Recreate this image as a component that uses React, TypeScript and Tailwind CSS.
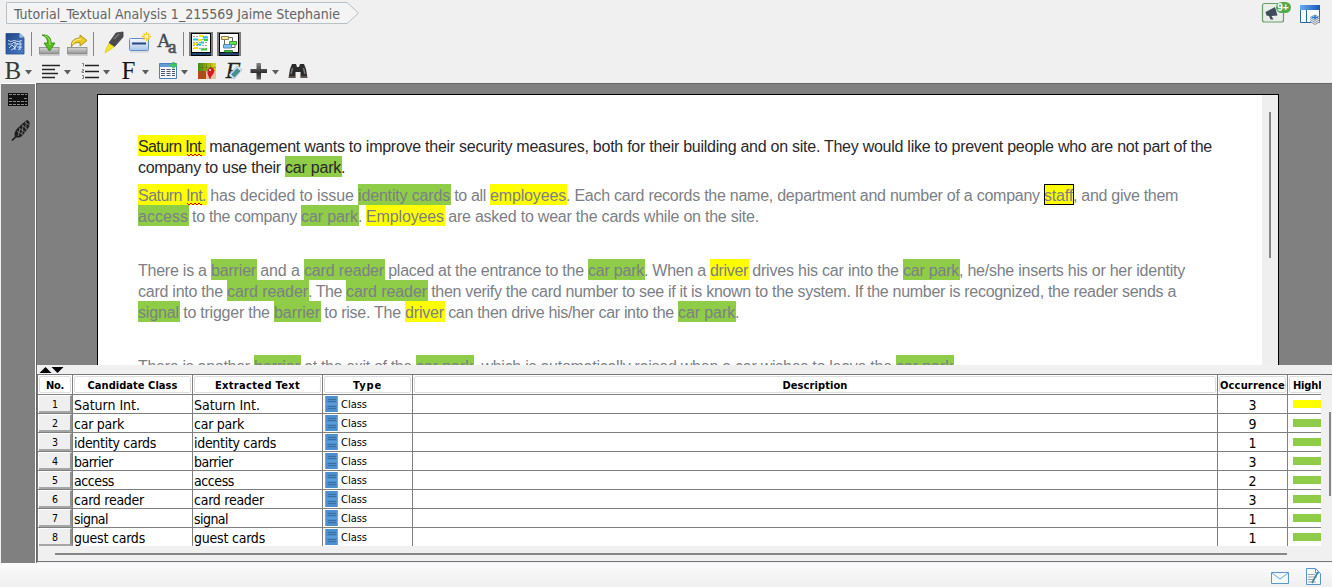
import { useLayoutEffect, useRef, type ReactNode } from "react";

type Tone = "" | "y" | "g" | "s";
type Segment = [text: string, width: number, tone?: Tone];

/** Text run whose tracking is adjusted so that it fills the given width. */
function Fit({ text, width, className = "" }: { text: string; width: number; className?: string }) {
  const ref = useRef<HTMLSpanElement>(null);
  useLayoutEffect(() => {
    const el = ref.current;
    if (!el) return;
    el.style.letterSpacing = "0px";
    const natural = el.getBoundingClientRect().width;
    el.style.letterSpacing = `${(width - natural) / text.length}px`;
  }, [text, width]);
  return (
    <span ref={ref} className={`inline-block shrink-0 whitespace-pre ${className}`}>
      {text}
    </span>
  );
}

const tones: Record<Tone, string> = {
  "": "",
  y: "pr-px bg-[#ffff00]",
  g: "pr-px bg-[#8fcc48]",
  s: "pr-px bg-[#ffff00] outline outline-1 -outline-offset-1 outline-black",
};

const squiggle = "M0 1l2 2 2-2 2 2 2-2 2 2 2-2 2 2 2-2";

function Line({ segments, className = "" }: { segments: Segment[]; className?: string }) {
  return (
    <div className={`flex h-[21px] shrink-0 leading-[23px] ${className}`}>
      {segments.map(([text, width, tone = ""], i) => (
        <span key={i} className={`relative h-[21px] shrink-0 ${tones[tone]} ${i > 0 && !tone ? "-ml-px" : ""}`}>
          <Fit text={text} width={tone ? width - 1 : i > 0 ? width + 1 : width} />
          {text === "Saturn Int." && (
            <svg className="absolute left-[49px] top-[18px]" width="15" height="4" viewBox="0 0 15 4">
              <path d={squiggle} fill="none" stroke="#e80000" strokeWidth="1" />
            </svg>
          )}
        </span>
      ))}
    </div>
  );
}

const intro: Segment[][] = [
  [["Saturn Int.", 68, "y"], [" management wants to improve their security measures, both for their building and on site. They would like to prevent people who are not part of the", 1006]],
  [["company to use their ", 147], ["car park", 57, "g"], [".", 4]],
];
const second: Segment[][] = [
  [["Saturn Int.", 69, "y"], [" has decided to issue ", 151], ["identity cards", 93, "g"], [" to all ", 39], ["employees", 77, "y"], [". Each card records the name, department and number of a company ", 477], ["staff", 30, "s"], [", and give them", 104]],
  [["access", 51, "g"], [" to the company ", 112], ["car park", 58, "g"], [". ", 7], ["Employees", 79, "y"], [" are asked to wear the cards while on the site.", 314]],
];
const third: Segment[][] = [
  [["There is a ", 73], ["barrier", 46, "g"], [" and a ", 47], ["card reader", 81, "g"], [" placed at the entrance to the ", 203], ["car park", 57, "g"], [". When a ", 65], ["driver", 39, "y"], [" drives his car into the ", 154], ["car park", 57, "g"], [", he/she inserts his or her identity", 225]],
  [["card into the ", 89], ["card reader", 82, "g"], [". The ", 37], ["card reader", 82, "g"], [" then verify the card number to see if it is known to the system. If the number is recognized, the reader sends a", 748]],
  [["signal", 42, "g"], [" to trigger the ", 94], ["barrier", 47, "g"], [" to rise. The ", 84], ["driver", 40, "y"], [" can then drive his/her car into the ", 233], ["car park", 58, "g"], [".", 3]],
];
const fourth: Segment[] = [
  ["There is another ", 116], ["barrier", 47, "g"], [" at the exit of the ", 115], ["car park", 58, "g"], [", which is automatically raised when a car wishes to leave the ", 422], ["car park", 58, "g"], [".", 4],
];

/** Toolbar slot; drawing coordinates share the window's pixel grid. */
function Slot({ x, y, w, h, children }: { x: number; y: number; w: number; h: number; children?: ReactNode }) {
  return (
    <svg className="block shrink-0" width={w} height={h} viewBox={`${x} ${y} ${w} ${h}`}>
      {children}
    </svg>
  );
}

const Arrow = ({ x }: { x: number }) => <path d={`M${x} 70h7l-3.5 4.5z`} fill="#5c5c5c" />;
const Sep = ({ x }: { x: number }) => <path d={`M${x + 0.5} 32v24`} stroke="#858585" />;

function Gradients() {
  return (
    <defs>
      <linearGradient id="tray" x1="0" y1="0" x2="0" y2="1">
        <stop offset="0" stopColor="#d8d8d8" />
        <stop offset="1" stopColor="#929292" />
      </linearGradient>
      <linearGradient id="doc" x1="0" y1="0" x2="1" y2="1">
        <stop offset="0" stopColor="#1d4584" />
        <stop offset="1" stopColor="#4c7dc6" />
      </linearGradient>
      <linearGradient id="card" x1="0" y1="0" x2="0" y2="1">
        <stop offset="0" stopColor="#f5f9fe" />
        <stop offset="1" stopColor="#a9c5ea" />
      </linearGradient>
      <linearGradient id="dark" x1="0" y1="0" x2="0" y2="1">
        <stop offset="0" stopColor="#888" />
        <stop offset=".6" stopColor="#2c2c2c" />
        <stop offset="1" stopColor="#666" />
      </linearGradient>
      <linearGradient id="palette" x1="0" y1="0" x2="1" y2="0">
        <stop offset="0" stopColor="#3f8e12" />
        <stop offset="1" stopColor="#e2d51a" />
      </linearGradient>
    </defs>
  );
}

function ToolbarTop() {
  return (
    <div className="flex h-[29px] shrink-0">
      <Slot x={0} y={29} w={30} h={29}>
        <Gradients />
        <path d="M6 33.500h13.500l4.500 4v16.500H6z" fill="url(#doc)" stroke="#214d90" strokeWidth=".8" />
        <path d="M19.500 33.500v4h4.500z" fill="#a5c5f0" />
        <path d="M8 40.500l3 1 3-1 4 1 4-1M8 44h4l2-2 3 2h5M9 48l3-3 3 3-4 2M15 42v8M18 43l-4 6M17 47h5M18 50l3-3M20 41v9" fill="none" stroke="#d5e4fa" strokeWidth=".9" />
      </Slot>
      <Slot x={30} y={29} w={34} h={29}>
        <Sep x={31} />
        <rect x="39.500" y="47.500" width="19.500" height="6.500" fill="url(#tray)" stroke="#858585" strokeWidth=".8" />
        <path d="M40 55.500h20" stroke="#d0d0d0" />
        <path d="M42 35c6-.5 9 2 9 8h4l-5.500 8-5.500-8h3.500c0-4-1.500-6-5.500-8z" fill="#55bf1d" stroke="#298309" strokeWidth=".8" />
        <path d="M45 36c4 1 5 4 5 9" fill="none" stroke="#adeb70" strokeWidth="1" />
      </Slot>
      <Slot x={64} y={29} w={38} h={29}>
        <rect x="67.500" y="47.500" width="19.500" height="6.500" fill="url(#tray)" stroke="#858585" strokeWidth=".8" />
        <path d="M68 55.500h20" stroke="#d0d0d0" />
        <path d="M71.500 47c-1-6 3-9 8.500-9V35l7 5.500-7 5.500V42.500c-4 0-7 .500-8.500 4.500z" fill="#eccb29" stroke="#a18309" strokeWidth=".8" />
        <path d="M72.500 44c1-3 4-5 8.500-5" fill="none" stroke="#fff59c" />
        <Sep x={93} />
      </Slot>
      <Slot x={102} y={29} w={26} h={29}>
        <path d="M116 33l7-1v5l-8.500 9.500-5.500-3.500z" fill="#4b4b4d" stroke="#39393b" strokeWidth=".8" />
        <path d="M114 39l5-5" stroke="#7b7b7e" strokeWidth="1.500" />
        <path d="M109 43.500l5 3.500-3.500 2.500-5.500 3.500 1.500-5z" fill="#f4e523" stroke="#d5c50c" strokeWidth=".7" />
      </Slot>
      <Slot x={128} y={29} w={27} h={29}>
        <rect x="129.500" y="38.500" width="19" height="12" rx="1" fill="url(#card)" stroke="#648cc6" />
        <path d="M132 43.500h14" stroke="#25467e" strokeWidth="2" />
        <path d="M130 52h19" stroke="#c6cbd3" />
        <path d="M146.500 32v9M142 36.500h9M143.500 33.500l6 6M149.500 33.500l-6 6" stroke="#efc51d" strokeWidth="1.300" />
        <circle cx="146.500" cy="36.500" r="2" fill="#fff39b" />
      </Slot>
      <Slot x={155} y={29} w={33} h={29}>
        <text x="157" y="47" fontFamily="Liberation Serif, serif" fontSize="19" fill="#454a50" stroke="#454a50" strokeWidth=".4">A</text>
        <text x="168" y="53" fontFamily="Liberation Serif, serif" fontSize="19" fill="#59616b" stroke="#454a50" strokeWidth=".6">a</text>
        <Sep x={183} />
      </Slot>
      <Slot x={188} y={29} w={28} h={29}>
        <path d="M189 32h24v24h-24z" fill="#7c7c7c" />
        <path d="M191 33h20v23h-20z" fill="#000" />
        <path d="M192 34h18v18h-18z" fill="#fff" />
        <path d="M191.500 54h19.500" stroke="#3575bd" strokeWidth="1.200" />
        <path d="M193 36.500h15M193 39.500h14M193 42.500h15M193 45.500h14M193 48.500h15" stroke="#a5a5a5" strokeDasharray="2 1" />
        <path d="M193 39.500h5M203 37.500h5M197 44.500h4M201 42.500h3" stroke="#13c8f5" strokeWidth="1.800" />
        <path d="M199 36h4M198 40h4M193 44h4M194 48h4" stroke="#f4e500" strokeWidth="1.800" />
        <path d="M204 40h4M201 49.500h6" stroke="#2dd52d" strokeWidth="1.800" />
      </Slot>
      <Slot x={216} y={29} w={30} h={29}>
        <path d="M217 32h24v24h-24z" fill="#7c7c7c" />
        <path d="M219 33h20v23h-20z" fill="#000" />
        <path d="M220 34h18v18h-18z" fill="#fff" />
        <path d="M219.500 54h19.500" stroke="#3575bd" strokeWidth="1.200" />
        <path d="M224.500 39v6M229 37.500h3.500v4M231 47.500h4v-3" fill="none" stroke="#666" />
        <path d="M221.500 36.500h7v3h-7z" fill="#ffe982" stroke="#85805b" />
        <path d="M229.500 41.500h7v3h-7z" fill="#50e947" stroke="#4c944a" />
        <path d="M223.500 44.500h8v3.500h-8z" fill="#72c5ff" stroke="#6886a0" />
        <path d="M224.500 50.500h8v1.500h-8z" fill="#44de44" stroke="#39903c" />
      </Slot>
    </div>
  );
}

function ToolbarFormat() {
  return (
    <div className="flex h-[25px] shrink-0">
      <Slot x={0} y={58} w={38} h={25}>
        <text x="4.500" y="79" fontFamily="Liberation Serif, serif" fontSize="25" fill="#383838">B</text>
        <Arrow x={25} />
      </Slot>
      <Slot x={38} y={58} w={40} h={25}>
        <path d="M42 65.500h18M42 69.500h13M45 73.500h13M42 73.500h3M42 77.500h13" stroke="#252525" strokeWidth="1.300" />
        <Arrow x={64} />
      </Slot>
      <Slot x={78} y={58} w={40} h={25}>
        <path d="M85 65.500h14M85 71.500h14M85 77.500h14" stroke="#222" strokeWidth="1.500" />
        <path d="M82 63.500h1.500v3M82 69.500h1.500v1.500h-1.500v1.500h2M82 75.500h1.500v3h-1.500" fill="none" stroke="#555" strokeWidth=".7" />
        <Arrow x={103} />
      </Slot>
      <Slot x={118} y={58} w={36} h={25}>
        <text x="121.500" y="79" fontFamily="Liberation Serif, serif" fontSize="25" fill="#151515">F</text>
        <Arrow x={142} />
      </Slot>
      <Slot x={154} y={58} w={40} h={25}>
        <path d="M159.500 63.500h17v15h-17z" fill="#f5f9ff" stroke="#4c82bd" />
        <path d="M160 64h16v3h-16z" fill="#629ada" />
        <path d="M161 69.500h4M166.500 69.500h4M172 69.500h3M161 71.500h4M166.500 71.500h4M172 71.500h3M161 73.500h4M166.500 73.500h4M172 73.500h3M161 75.500h4M166.500 75.500h4M172 75.500h3" stroke="#505966" strokeWidth="1" />
        <path d="M173.500 62v6.500M170 65.200h7" stroke="#3dc45d" strokeWidth="2.200" />
        <Arrow x={181} />
      </Slot>
      <Slot x={194} y={58} w={28} h={25}>
        <path d="M198 63h18v16h-18z" fill="url(#palette)" />
        <path d="M198 71h8v8h-8z" fill="#b54a16" />
        <path d="M206 71h10v8h-10z" fill="#e9c3a0" />
        <path d="M198 67.500h18M202.500 63v16M206.500 63v8M210.500 63v8" stroke="#665f12" strokeWidth=".4" />
        <path d="M208 70c1-3 6-3 6 1 0 3-3 4-4 8-1-3-3-5-2-9z" fill="#de1820" stroke="#a8151c" strokeWidth=".5" />
        <circle cx="210" cy="70" r="1" fill="#fff" />
      </Slot>
      <Slot x={222} y={58} w={25} h={25}>
        <text x="225.500" y="78" fontFamily="Liberation Serif, serif" fontStyle="italic" fontSize="24" fill="#222" stroke="#222" strokeWidth=".3">F</text>
        <path d="M229 75l8-9 5 4-8 9z" fill="#d8edf6" stroke="#9bbccb" strokeWidth=".8" />
        <path d="M231.500 74.500l5.500-6 3 2.500-5.500 6z" fill="#4c9280" stroke="#397cae" strokeWidth=".8" />
      </Slot>
      <Slot x={247} y={58} w={37} h={25}>
        <path d="M256.500 63h4.500v6h6v4h-6v6.500h-4.500v-6.500h-6v-4h6z" fill="url(#dark)" />
        <Arrow x={272} />
      </Slot>
      <Slot x={284} y={58} w={28} h={25}>
        <path d="M292 64h4l1 3h2l1-3h4l2 5 1.500 9h-7v-6h-5v6h-7l1.500-9z" fill="#2b2b2c" />
        <path d="M292.500 68l-1.500 6M303.500 68l1.500 6" stroke="#777" strokeWidth="1.500" />
        <path d="M289 77h7M300 77h7" stroke="#927d75" />
      </Slot>
    </div>
  );
}

function Breadcrumb() {
  return (
    <header className="flex h-[29px] shrink-0 justify-between">
      <div className="relative flex h-[24px] w-[362px] items-start pl-[14px] pt-[3px]">
        <svg className="absolute left-0 top-0" width="362" height="26" viewBox="0 0 362 26">
          <path d="M6.500 2.500H347L358.500 13 347 23.500H6.500z" fill="#f4f4f4" stroke="#b8c0c8" />
        </svg>
        <Fit text="Tutorial_Textual Analysis 1_215569 Jaime Stephanie" width={326} className="relative text-[14px] leading-[22px] text-[#626466]" />
      </div>
      <svg className="shrink-0" width="72" height="28" viewBox="1260 0 72 28">
        <defs>
          <linearGradient id="blueBar" x1="0" y1="0" x2="1" y2="0">
            <stop offset="0" stopColor="#6aa9ee" />
            <stop offset="1" stopColor="#1859bb" />
          </linearGradient>
        </defs>
        <rect x="1262.500" y="3.500" width="21" height="18.500" rx="2" fill="#e9eee9" stroke="#6a9d6a" strokeWidth="1.200" />
        <path d="M1265.500 12l3-1.500 6.500-3.500 2.500 8.500-6 .500 2 3.500h-3l-1.500-3.500-2.500-.500z" fill="#3e4c5c" />
        <rect x="1276" y="2" width="15" height="11" rx="5.500" fill="#54a94d" />
        <text x="1277.300" y="11" fontFamily="Liberation Sans, sans-serif" fontSize="10" fontWeight="bold" fill="#fff">9+</text>
        <path d="M1300.500 6.500h19v16h-19z" fill="#f8fcff" stroke="#286a9a" />
        <path d="M1300 5h20v5h-20z" fill="url(#blueBar)" />
        <path d="M1306.500 10v12" stroke="#286a9a" />
        <path d="M1310 17.500l5-2.500 5 2.500-5 3zM1310 19.500l5 3 5-3M1310 21.500l5 3 5-3" fill="#edf0f3" stroke="#7c8999" strokeWidth=".9" />
        <path d="M1312 17.500h6M1315 15.500v4" stroke="#2479d2" strokeWidth="1.600" />
      </svg>
    </header>
  );
}

const rows: [string, number, boolean?][] = [
  ["Saturn Int.", 3, true],
  ["car park", 9],
  ["identity cards", 1],
  ["barrier", 3],
  ["access", 2],
  ["card reader", 3],
  ["signal", 1],
  ["guest cards", 1],
];
const textWidths: Record<string, number> = {
  "Saturn Int.": 66, "car park": 50, "identity cards": 82, barrier: 39, access: 40, "card reader": 70, signal: 34, "guest cards": 71,
};

const columns: [string, number, string][] = [
  ["No.", 18, "w-[35px]"],
  ["Candidate Class", 90, "w-[120px]"],
  ["Extracted Text", 85, "w-[130px]"],
  ["Type", 29, "w-[90px]"],
  ["Description", 65, "w-[805px]"],
  ["Occurrence", 65, "w-[70px]"],
];

function ClassTable() {
  return (
    <div className="flex h-[188px] shrink-0 flex-col border-b border-l border-t border-[#73767a]">
      <div className="flex h-[171px] shrink-0">
        <div className="w-[1283px] shrink-0 overflow-hidden bg-white text-black">
          <div className="flex h-[20px] w-[1360px] border-b border-[#808080] text-[11px] font-bold leading-[19px]">
            {columns.map(([name, width, cls]) => (
              <div key={name} className={`flex shrink-0 border-r border-[#808080] p-px ${cls}`}>
                <div className="flex h-[17px] flex-1 justify-center rounded-[2px] border border-[#dedede]">
                  <Fit text={name} width={width} className="leading-[17px]" />
                </div>
              </div>
            ))}
            <div className="m-px flex w-[60px] rounded-[2px] border border-[#dedede] pl-[3px]">
              <Fit text="Highlight" width={50} className="leading-[17px]" />
            </div>
          </div>
          {rows.map(([name, count, yellow], i) => (
            <div key={name} className="flex h-[19px] w-[1360px] border-b border-[#808080] text-[14px]">
              <div className="flex w-[35px] shrink-0 border-r border-[#808080] pl-px">
                <div className="h-[18px] w-[33px] border-b-2 border-r-2 border-t border-b-[#a6a6a6] border-r-[#929292] border-t-white bg-[#efefef] pl-px text-center text-[10.5px] leading-[16px]">{i + 1}</div>
              </div>
              <div className="w-[120px] shrink-0 border-r border-[#808080] pl-px">
                <Fit text={name} width={textWidths[name]} className="leading-[20px]" />
              </div>
              <div className="w-[130px] shrink-0 border-r border-[#808080] pl-px">
                <Fit text={name} width={textWidths[name]} className="leading-[20px]" />
              </div>
              <div className="flex w-[90px] shrink-0 gap-[3px] border-r border-[#808080] pl-[2px] pt-px">
                <svg width="13" height="16" viewBox="0 0 13 16">
                  <path d="M0 0h13v16H0z" fill="#4d8fce" />
                  <path d="M.5 0v16M12.500 0v16" stroke="#6cabdf" />
                  <path d="M3 3.500h8M3 5.500h8M3 10.500h8M3 12.500h8" stroke="#3c719f" />
                  <path d="M0 8h13" stroke="#68a7e3" />
                </svg>
                <Fit text="Class" width={26} className="text-[11px] leading-[18px]" />
              </div>
              <div className="w-[805px] shrink-0 border-r border-[#808080]" />
              <div className="w-[70px] shrink-0 border-r border-[#808080] text-center leading-[21px]">{count}</div>
              <div className="pl-[5px] pt-[5px]">
                <div className={`h-[8px] w-[60px] ${yellow ? "bg-[#ffff00]" : "bg-[#8fcc48]"}`} />
              </div>
            </div>
          ))}
        </div>
        <div className="flex flex-1 justify-end pt-[37px]">
          <div className="mr-px h-[84px] w-[2px] bg-[#868686]" />
        </div>
      </div>
      <div className="pl-[17px] pt-[7px]">
        <div className="h-[2px] w-[1232px] bg-[#868686]" />
      </div>
    </div>
  );
}

function Sidebar() {
  return (
    <aside className="w-[35px] shrink-0 border-r border-t border-white bg-[#808080]">
      <svg width="34" height="66" viewBox="1 84 34 66">
        <path d="M8 93h20v13H8z" fill="#111" />
        <path d="M9 94.500h18M9 98.500h3M24 98.500h3M9 101.500h18M9 104.500h18" stroke="#8b8b8b" strokeDasharray="3 1" />
        <path d="M12 140.500l4-4" stroke="#171717" strokeWidth="1.600" />
        <path d="M15 137c-2-6 3-9 7-13l5-4c3 1 3 4 2 7l-6 8c-3 3-5 3-8 2z" fill="#1c1c1c" />
        <path d="M17 131l6 4M19 128l6 4M22 125l5 4M25 122l4 3M18 136l2-7M22 134l1-9M26 130V122" stroke="#858585" strokeWidth=".8" />
      </svg>
    </aside>
  );
}

function DocumentPane() {
  return (
    <div className="h-[282px] shrink-0 overflow-hidden border-t border-[#666] bg-[#808080] pl-[60px] pt-[10px]">
      <div className="flex h-[300px] w-[1182px] border border-black bg-white">
        <div className="w-[1164px] shrink-0 bg-white pl-[40px] pt-[40px] font-['Liberation_Sans',Arial,sans-serif] text-[16px] text-[#7c8086]">
          <div className="text-[#29292c]">
            {intro.map((l, i) => <Line key={i} segments={l} />)}
          </div>
          <div className="pt-[7px]">
            {second.map((l, i) => <Line key={i} segments={l} />)}
          </div>
          <div className="pt-[33px]">
            {third.map((l, i) => <Line key={i} segments={l} />)}
          </div>
          <div className="pt-[33px]">
            <Line segments={fourth} />
          </div>
        </div>
        <div className="flex flex-1 bg-[#efefef] pl-[7px] pt-[17px]">
          <div className="h-[146px] w-[2px] bg-[#868686]" />
        </div>
      </div>
    </div>
  );
}

export default function App() {
  return (
    <div className="flex h-[587px] w-[1332px] flex-col overflow-hidden bg-[#f0f0f0] font-['DejaVu_Sans_Condensed','DejaVu_Sans',sans-serif]">
      <Breadcrumb />
      <ToolbarTop />
      <ToolbarFormat />
      <main className="flex h-[480px] shrink-0 pl-px">
        <Sidebar />
        <section className="flex min-w-0 flex-1 flex-col border-l border-[#686868]">
          <DocumentPane />
          <div className="h-[9px] shrink-0">
            <svg width="30" height="9" viewBox="0 0 30 9">
              <path d="M2.500 8h12l-6-6zM14.500 2h12l-6 6z" fill="#000" />
            </svg>
          </div>
          <ClassTable />
        </section>
      </main>
      <footer className="flex h-[24px] shrink-0 justify-end bg-gradient-to-b from-[#fbfbfb] to-[#efefef]">
        <svg width="72" height="24" viewBox="1260 563 72 24">
          <path d="M1271.500 572.500h17v11h-17z" fill="#f5faff" stroke="#5896d1" />
          <path d="M1272 573l8 6 8-6" fill="none" stroke="#66a4dc" />
          <path d="M1306.500 568.500h9l5 5v11h-14z" fill="#f6fbff" stroke="#5896d1" />
          <path d="M1315.500 569v4h4" fill="none" stroke="#5896d1" />
          <path d="M1308 574.500h7M1308 577h9M1308 579.500h7M1308 582h8" stroke="#a0a0a0" />
          <path d="M1318 572l-6 11" stroke="#3f8499" strokeWidth="1.600" />
        </svg>
      </footer>
    </div>
  );
}
